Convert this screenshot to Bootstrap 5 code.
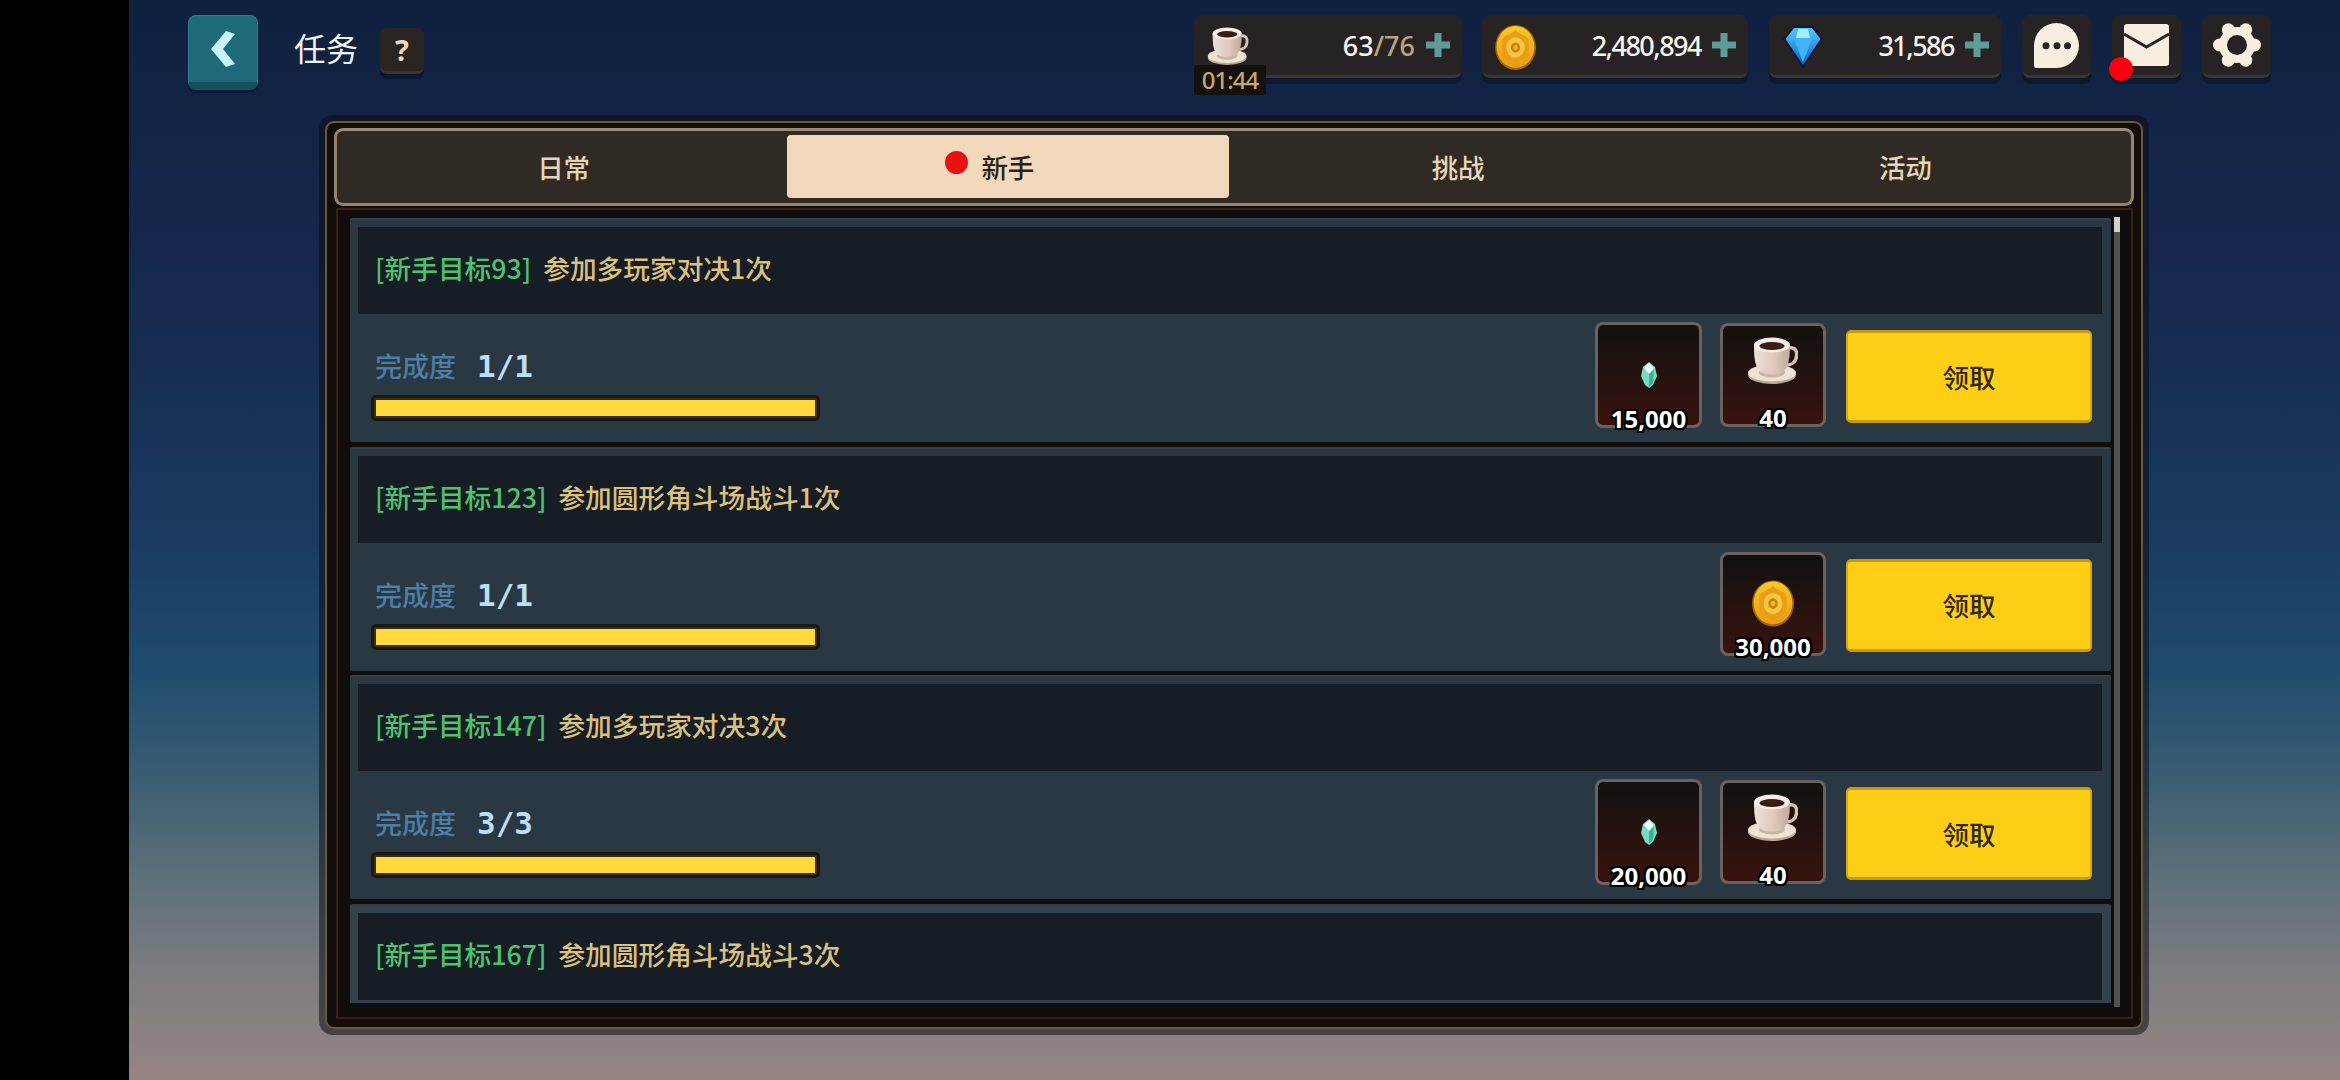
<!doctype html>
<html lang="zh">
<head>
<meta charset="utf-8">
<title>任务</title>
<link href="https://cdn.jsdelivr.net/npm/bootstrap@5.3.0/dist/css/bootstrap.min.css" rel="stylesheet">
<style>
html,body{height:1080px;overflow:hidden;background:#000}
body{font-family:"Noto Sans","Noto Sans CJK SC",sans-serif}
.gm-side{width:129px;flex:none;background:#000}
.gm-stage{flex:1 1 auto;height:1080px;min-width:0;background:linear-gradient(180deg,#10203f 0,#16294f 28%,#1a3b61 50%,#1f4c6e 62%,#3a5d72 72%,#5c7079 81%,#7c7d80 90%,#968483 100%)}
.gm-top{height:115px;padding:15px 69px 0 59px}
.gm-back{width:70px;height:75px;background:#1f6a79;border:1px solid #2b7f8d;border-bottom:8px solid #174f5c;border-radius:8px;box-shadow:0 3px 0 #0d1a33}
.gm-heading{font-family:"Noto Sans CJK SC",sans-serif;font-size:32px;color:#f2f2f0;margin-left:36px;line-height:64px}
.gm-help{width:44px;height:46px;margin:13px 0 0 22px;background:#2a2523;border-bottom:3px solid #3a3431;border-radius:7px;box-shadow:0 5px 0 #0d1830;color:#f0d8b6;font-weight:700;font-size:29px;line-height:1}
.gm-stat{height:63px;background:#272324;border-bottom:3px solid #3c3735;border-radius:8px;box-shadow:0 6px 0 #0d1932;padding:0 12px 0 0;position:relative}
.gm-s1{width:268px;margin-right:20px}
.gm-s2{width:266px;margin-right:21px}
.gm-s3{width:232px;margin-right:21px}
.gm-sq{width:69px;margin-right:21px;padding:0}
.gm-sq:last-child{margin-right:0}
.gm-num{color:#f7f5f0;font-size:27px;font-weight:500;letter-spacing:-1.5px;margin-right:11px;line-height:63px}
.gm-num em{font-style:normal;color:#bba37c}
.gm-num.gm-flat{letter-spacing:0}
.gm-timer{position:absolute;left:0;top:50px;width:72px;height:30px;background:#15110e;color:#c7a66c;font-size:24px;font-weight:500;line-height:30px;letter-spacing:-1px;text-align:center;border-radius:2px}
.gm-mdot{position:absolute;left:-3px;top:42px;width:24px;height:24px;border-radius:50%;background:#f8000f}
.gm-frame{margin-left:190px;width:1830px;height:920px;padding:6px;background:rgba(12,12,24,.55);border-radius:14px}
.gm-inner{height:100%;border:2px solid #6a5a30;border-radius:9px;background:#120e0c;padding:5px 7px}
.gm-tabs{height:78px;padding:0 2px 0 3px;background:#302a24;border:3px solid #93836f;border-top-color:#9c8b77;border-radius:9px;flex-wrap:nowrap}
.gm-tabs .nav-item{display:flex}
.gm-tabs .nav-link{width:100%;color:#e6d6b6;font-family:"Noto Sans CJK SC",sans-serif;font-size:26.500px;font-weight:500;line-height:72px;padding:0;border-radius:4px;position:relative}
.gm-tabs .nav-link.active{background:#f2d9bb;color:#2a2118;line-height:63px;margin:4px 6px 5px 0}
.gm-reddot{position:absolute;left:158px;top:16px;width:23px;height:23px;border-radius:50%;background:#e81212}
.gm-panel{margin:2px 1px 0 2px;height:811px;border:2px solid #3a1f19;background:#100d0c;padding:8px 11px 10px 12px}
.gm-list{flex:1 1 auto;min-width:0;height:785px;overflow:hidden}
.gm-track{flex:none;width:6px;height:790px;margin:-1px 0 0 3px;background:#56514b}
.gm-thumb{height:15px;background:#d6d0c8}
.gm-row{background:#293843;border-top:2px solid #30414d;margin-bottom:4.5px;border-radius:2px}
.gm-row:last-child{background:#33434e;margin-bottom:0;padding-bottom:5px}
.gm-title{height:87px;margin:7px 9px 0 7.5px;background:#161d25;padding-left:17.5px;font-family:"Noto Sans CJK SC",sans-serif;font-size:26.700px;font-weight:500;line-height:82px;color:#dcc07f;white-space:pre}
.gm-title b{font-weight:500;color:#4fc26e;margin-right:6px}
.gm-body{height:128px;padding-right:19px}
.gm-left{padding:34px 0 0 21px;width:470px}
.gm-done{height:36px;line-height:36px;padding-left:4px}
.gm-done span{font-family:"Noto Sans CJK SC",sans-serif;font-size:27px;font-weight:500;color:#4d7ea6}
.gm-done strong{font-family:"DejaVu Sans Mono",monospace;font-size:31px;color:#bcdff7;margin-left:21px}
.gm-bar.progress{height:26px;margin-top:11px;width:449px;background:#3a2e15;border:3px solid #1b1813;border-radius:5px;padding:2px;box-shadow:none}
.gm-bar .progress-bar{background:#ffd93e;border-radius:0}
.gm-slot{flex:none;width:107px;height:106px;margin-right:18px;position:relative;border:3px solid #6c625d;border-radius:8px;background:linear-gradient(180deg,#15110f 10%,#38130e 100%)}
.gm-slot.gm-nar{width:106px;height:104px;margin-right:20px}
.gm-qty{position:absolute;left:50%;bottom:-7px;transform:translateX(-50%);font-weight:700;font-size:24px;line-height:26px;color:#fff;white-space:nowrap;text-shadow:2px 0 0 #000,-2px 0 0 #000,0 2px 0 #000,0 -2px 0 #000,2px 2px 0 #000,-2px 2px 0 #000,2px -2px 0 #000,-2px -2px 0 #000}
.gm-claim.btn{flex:none;width:246px;height:93px;margin-top:3px;padding:0;background:#ffcf18;border:0;border-top:3px solid #c89a12;border-bottom:3px solid #c89a12;border-left:2px solid #d6a514;border-right:2px solid #d6a514;border-radius:5px;color:#30280f;font-family:"Noto Sans CJK SC",sans-serif;font-size:26.500px;font-weight:500}
.gm-rgt{margin-bottom:6px}
.gm-ico-cup{width:50px;height:47px;margin-top:11px}
.gm-ico-coin{width:42px;height:47px;margin-top:25px}
.gm-ico-crystal{width:16px;height:26px;margin-top:37px}
.gm-cup-top{left:13px;top:12px}
.gm-coin-top{left:13px;top:10px}
.gm-gem-top{left:14px;top:11px}
</style>
</head>
<body class="d-flex">
<svg width="0" height="0" class="position-absolute">
<defs>
<linearGradient id="cupg" x1="0" x2="1"><stop offset="0" stop-color="#efe1d8"/><stop offset=".6" stop-color="#dcc6ba"/><stop offset="1" stop-color="#bfa89c"/></linearGradient>
<linearGradient id="coing" x1="0" y1="0" x2="0" y2="1"><stop offset="0" stop-color="#fbc72c"/><stop offset="1" stop-color="#e89c10"/></linearGradient>
<linearGradient id="gemg" x1="0" y1="0" x2="0" y2="1"><stop offset="0" stop-color="#56c8fb"/><stop offset="1" stop-color="#0a5fd0"/></linearGradient>
<symbol id="cup" viewBox="0 0 50 47">
<ellipse cx="24" cy="38" rx="24" ry="9" fill="#b9a696"/>
<ellipse cx="24" cy="36" rx="24" ry="8.500" fill="#efe2d5"/>
<ellipse cx="24" cy="35.500" rx="13" ry="5" fill="#c9b3a4"/>
<path d="M40 11C48 10 49 14 48.500 19C48 26 42 28 38 28" fill="none" stroke="#d6c3b7" stroke-width="3.500"/>
<path d="M6 8C6 22 7 33 15 36C20 38 29 38 33 36C41 32 42 20 42 8Z" fill="url(#cupg)"/>
<ellipse cx="24" cy="8" rx="18" ry="7.500" fill="#f6ece5"/>
<ellipse cx="24" cy="9" rx="12.500" ry="4" fill="#3a1d14"/>
</symbol>
<symbol id="coin" viewBox="0 0 40 44">
<ellipse cx="20" cy="22" rx="20" ry="22" fill="#9a6500"/>
<ellipse cx="20" cy="21.500" rx="18.500" ry="20.500" fill="url(#coing)"/>
<path d="M20 5C24 10 32 10 33 15V29C32 34 24 34 20 39C16 34 8 34 7 29V15C8 10 16 10 20 5Z" fill="#e89e16"/>
<ellipse cx="20" cy="22" rx="9" ry="10" fill="#f9c544"/>
<ellipse cx="20" cy="22" rx="4.500" ry="5" fill="#c98208"/>
<ellipse cx="20" cy="22" rx="2.200" ry="2.500" fill="#f3b22e"/>
</symbol>
<symbol id="gem" viewBox="0 0 40 42">
<polygon points="10,0 30,0 40,13 20,42 0,13" fill="#0b1b33"/>
<polygon points="11,2 29,2 37.500,13 20,39 2.500,13" fill="url(#gemg)"/>
<polygon points="13,3 27,3 29,13 20,36 11,13" fill="#3fb4f8"/>
<polygon points="15,3 25,3 27,12 13,12" fill="#a8ecff"/>
</symbol>
<symbol id="crystal" viewBox="0 0 16 26">
<polygon points="8,0 14,5 16,14 12,23 8,26 4,23 0,14 2,5" fill="#74dcc0"/>
<polygon points="8,1 13,6 8,12 3,6" fill="#f0fffa"/>
<polygon points="8,12 13,8 12,21 8,25" fill="#3fb09c"/>
</symbol>
<symbol id="plus" viewBox="0 0 24 24"><path d="M8.500 0h7v8.500H24v7h-8.500V24h-7v-8.500H0v-7h8.500z" fill="#5f9c96"/></symbol>
</defs>
</svg>

<div class="gm-side"></div>
<main class="gm-stage">
  <header class="gm-top d-flex align-items-start">
    <a class="gm-back d-flex align-items-center justify-content-center" href="#" aria-label="返回">
      <svg width="25" height="36" viewBox="0 0 25 36"><polygon points="15,0 24,3 12,18 24,33 15,36 0,18" fill="#c9f5ff"/></svg>
    </a>
    <div class="gm-heading">任务</div>
    <div class="gm-help d-flex align-items-center justify-content-center">?</div>
    <div class="gm-stat gm-s1 ms-auto d-flex align-items-center">
      <svg class="position-absolute gm-cup-top" width="42" height="38"><use href="#cup"/></svg>
      <span class="gm-num gm-flat ms-auto">63<em>/76</em></span>
      <svg width="24" height="24"><use href="#plus"/></svg>
      <div class="gm-timer">01:44</div>
    </div>
    <div class="gm-stat gm-s2 d-flex align-items-center">
      <svg class="position-absolute gm-coin-top" width="41" height="45"><use href="#coin"/></svg>
      <span class="gm-num ms-auto">2,480,894</span>
      <svg width="24" height="24"><use href="#plus"/></svg>
    </div>
    <div class="gm-stat gm-s3 d-flex align-items-center">
      <svg class="position-absolute gm-gem-top" width="40" height="42"><use href="#gem"/></svg>
      <span class="gm-num ms-auto">31,586</span>
      <svg width="24" height="24"><use href="#plus"/></svg>
    </div>
    <div class="gm-stat gm-sq d-flex align-items-center justify-content-center">
      <svg width="45" height="45" viewBox="0 0 45 45"><path d="M22.500 0A22.500 22.500 0 1 1 22.500 45H2Q0 45 0 43V22.500A22.500 22.500 0 0 1 22.500 0Z" fill="#f8eee0"/><circle cx="12" cy="22.700" r="3.500" fill="#272324"/><circle cx="23" cy="22.700" r="3.500" fill="#272324"/><circle cx="33.500" cy="22.700" r="3.500" fill="#272324"/></svg>
    </div>
    <div class="gm-stat gm-sq d-flex align-items-center justify-content-center">
      <svg width="45" height="42" viewBox="0 0 45 42"><rect width="45" height="42" rx="3" fill="#f8eee0"/><path d="M0 10L22.500 23L45 10" fill="none" stroke="#2a2524" stroke-width="3"/></svg>
      <span class="gm-mdot"></span>
    </div>
    <div class="gm-stat gm-sq d-flex align-items-center justify-content-center">
      <svg width="48" height="44" viewBox="0 0 48 44"><g fill="#f8eee0"><circle cx="24" cy="22" r="18"/><circle cx="41.500" cy="22" r="6.500"/><circle cx="6.500" cy="22" r="6.500"/><circle cx="32.700" cy="6.800" r="6.500"/><circle cx="15.300" cy="6.800" r="6.500"/><circle cx="32.700" cy="37.200" r="6.500"/><circle cx="15.300" cy="37.200" r="6.500"/></g><circle cx="24" cy="22" r="10" fill="#272324"/></svg>
    </div>
  </header>

  <section class="gm-frame">
    <div class="gm-inner">
      <ul class="nav nav-justified gm-tabs">
        <li class="nav-item"><a class="nav-link" href="#">日常</a></li>
        <li class="nav-item"><a class="nav-link active" href="#"><span class="gm-reddot"></span>新手</a></li>
        <li class="nav-item"><a class="nav-link" href="#">挑战</a></li>
        <li class="nav-item"><a class="nav-link" href="#">活动</a></li>
      </ul>
      <div class="gm-panel d-flex align-items-start">
        <div class="gm-list">
          <article class="gm-row">
            <div class="gm-title"><b>[新手目标93]</b> 参加多玩家对决1次</div>
            <div class="gm-body d-flex align-items-center">
              <div class="gm-left align-self-start">
                <div class="gm-done"><span>完成度</span><strong>1/1</strong></div>
                <div class="progress gm-bar"><div class="progress-bar w-100"></div></div>
              </div>
              <div class="ms-auto gm-rgt d-flex align-items-center">
                <div class="gm-slot d-flex justify-content-center"><svg class="gm-ico-crystal"><use href="#crystal"/></svg><span class="gm-qty">15,000</span></div>
                <div class="gm-slot gm-nar d-flex justify-content-center"><svg class="gm-ico-cup"><use href="#cup"/></svg><span class="gm-qty">40</span></div>
                <button class="btn gm-claim" type="button">领取</button>
              </div>
            </div>
          </article>
          <article class="gm-row">
            <div class="gm-title"><b>[新手目标123]</b> 参加圆形角斗场战斗1次</div>
            <div class="gm-body d-flex align-items-center">
              <div class="gm-left align-self-start">
                <div class="gm-done"><span>完成度</span><strong>1/1</strong></div>
                <div class="progress gm-bar"><div class="progress-bar w-100"></div></div>
              </div>
              <div class="ms-auto gm-rgt d-flex align-items-center">
                <div class="gm-slot gm-nar d-flex justify-content-center"><svg class="gm-ico-coin"><use href="#coin"/></svg><span class="gm-qty">30,000</span></div>
                <button class="btn gm-claim" type="button">领取</button>
              </div>
            </div>
          </article>
          <article class="gm-row">
            <div class="gm-title"><b>[新手目标147]</b> 参加多玩家对决3次</div>
            <div class="gm-body d-flex align-items-center">
              <div class="gm-left align-self-start">
                <div class="gm-done"><span>完成度</span><strong>3/3</strong></div>
                <div class="progress gm-bar"><div class="progress-bar w-100"></div></div>
              </div>
              <div class="ms-auto gm-rgt d-flex align-items-center">
                <div class="gm-slot d-flex justify-content-center"><svg class="gm-ico-crystal"><use href="#crystal"/></svg><span class="gm-qty">20,000</span></div>
                <div class="gm-slot gm-nar d-flex justify-content-center"><svg class="gm-ico-cup"><use href="#cup"/></svg><span class="gm-qty">40</span></div>
                <button class="btn gm-claim" type="button">领取</button>
              </div>
            </div>
          </article>
          <article class="gm-row">
            <div class="gm-title"><b>[新手目标167]</b> 参加圆形角斗场战斗3次</div>
          </article>
        </div>
        <div class="gm-track"><div class="gm-thumb"></div></div>
      </div>
    </div>
  </section>
</main>
<script src="https://cdn.jsdelivr.net/npm/bootstrap@5.3.0/dist/js/bootstrap.bundle.min.js"></script>
</body>
</html>
